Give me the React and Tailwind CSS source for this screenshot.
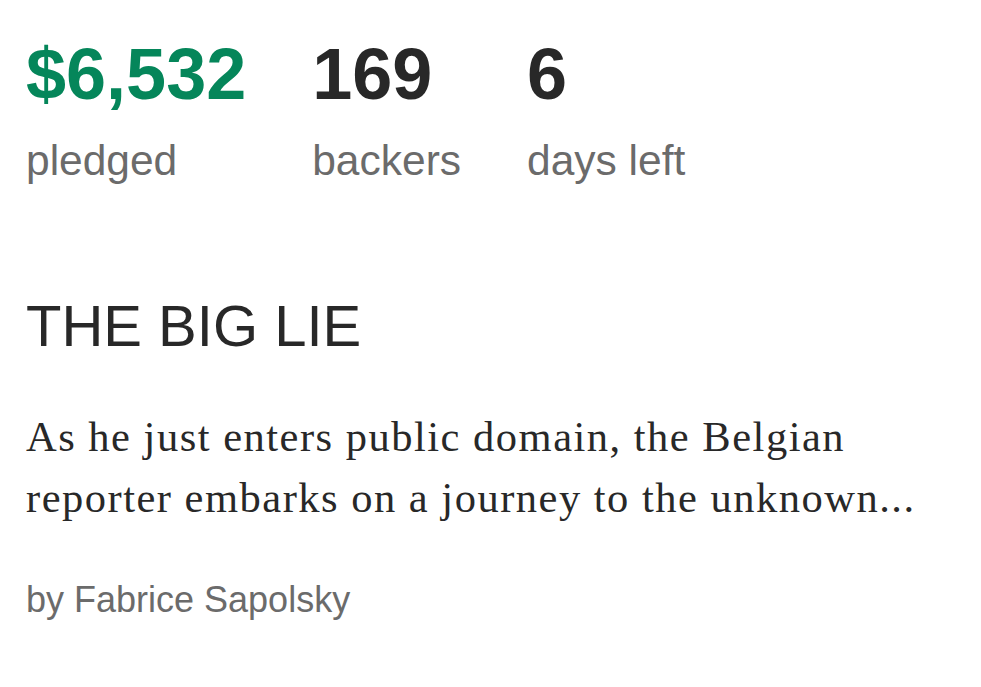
export default function App() {
  const sans = { fontFamily: '"Liberation Sans", Arial, Helvetica, sans-serif' };
  return (
    <div className="min-h-[687px] w-full bg-white pl-[26px] pr-[26px] pt-[38px]" style={sans}>
      <div className="flex gap-[66px]">
        <div className="flex flex-col">
          <div className="text-[72px] leading-[72px] font-bold text-[#05865a]">$6,532</div>
          <div className="mt-[30px] text-[42.5px] leading-[42px] text-[#6b6b6b]">pledged</div>
        </div>
        <div className="flex flex-col">
          <div className="text-[72px] leading-[72px] font-bold text-[#282828]">169</div>
          <div className="mt-[30px] text-[42.5px] leading-[42px] text-[#6b6b6b]">backers</div>
        </div>
        <div className="flex flex-col">
          <div className="text-[72px] leading-[72px] font-bold text-[#282828]">6</div>
          <div className="mt-[30px] text-[42.5px] leading-[42px] text-[#6b6b6b]">days left</div>
        </div>
      </div>
      <h1 className="mt-[115px] text-[58px] leading-[58px] font-normal text-[#282828]">THE BIG LIE</h1>
      <p
        className="mt-[51px] text-[42.5px] leading-[61px] tracking-[1.5px] text-[#282828]"
        style={{ fontFamily: '"Liberation Serif", "Times New Roman", serif' }}
      >
        As he just enters public domain, the Belgian reporter embarks on a journey to the unknown...
      </p>
      <div className="mt-[54px] text-[36px] leading-[36px] text-[#6b6b6b]">by Fabrice Sapolsky</div>
    </div>
  );
}
